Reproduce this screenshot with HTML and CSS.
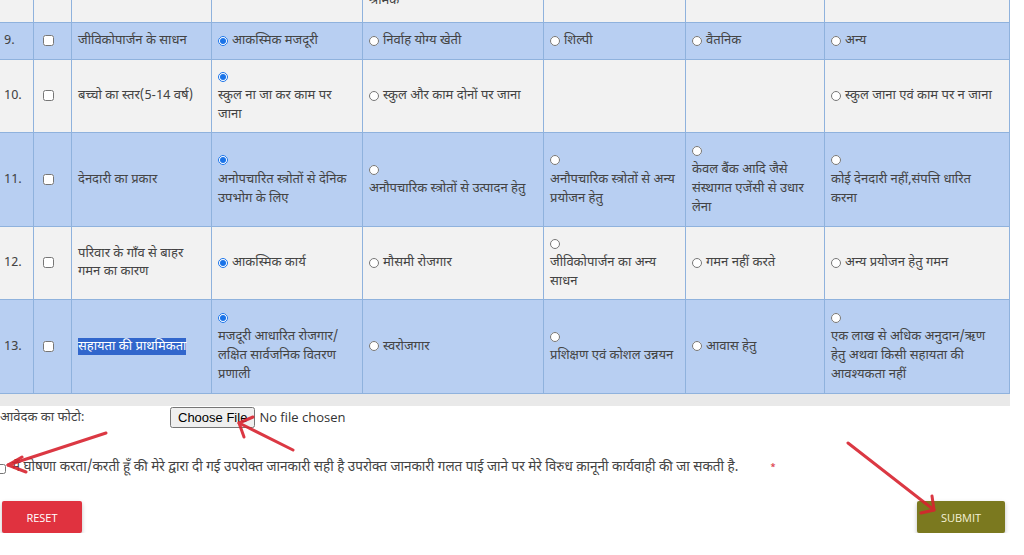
FILE: index.html
```html
<!DOCTYPE html>
<html lang="hi">
<head>
  <meta charset="UTF-8" />
  <meta name="viewport" content="width=device-width, initial-scale=1.0"/>
  <title>सर्वेक्षण प्रपत्र</title>
  <link rel="stylesheet" href="styles.css">
</head>
<body>

<div class="form-wrap">
  <table class="survey">
    <colgroup>
      <col class="c-no"><col class="c-chk"><col class="c-q">
      <col class="c-o1"><col class="c-o2"><col class="c-o3"><col class="c-o4"><col class="c-o5">
    </colgroup>
    <tr class="row-grey r8">
      <td></td>
      <td></td>
      <td></td>
      <td></td>
      <td><input type="radio" name="q8"><span class="blk">भूमिहीन कृषि<br>श्रमिक</span></td>
      <td></td>
      <td></td>
      <td></td>
    </tr>
    <tr class="row-blue r9">
      <td>9.</td>
      <td><input type="checkbox"></td>
      <td>जीविकोपार्जन के साधन</td>
      <td><input type="radio" name="q9" checked>आकस्मिक मजदूरी</td>
      <td><input type="radio" name="q9">निर्वाह योग्य खेती</td>
      <td><input type="radio" name="q9">शिल्पी</td>
      <td><input type="radio" name="q9">वैतनिक</td>
      <td><input type="radio" name="q9">अन्य</td>
    </tr>
    <tr class="row-grey r10">
      <td>10.</td>
      <td><input type="checkbox"></td>
      <td>बच्चो का स्तर(5-14 वर्ष)</td>
      <td><input type="radio" name="q10" checked><span class="blk">स्कुल ना जा कर काम पर जाना</span></td>
      <td><input type="radio" name="q10">स्कुल और काम दोनों पर जाना</td>
      <td></td>
      <td></td>
      <td><input type="radio" name="q10">स्कुल जाना एवं काम पर न जाना</td>
    </tr>
    <tr class="row-blue r11">
      <td>11.</td>
      <td><input type="checkbox"></td>
      <td>देनदारी का प्रकार</td>
      <td><input type="radio" name="q11" checked><span class="blk">अनोपचारित स्त्रोतों से देनिक उपभोग के लिए</span></td>
      <td><input type="radio" name="q11"><span class="blk">अनौपचारिक स्त्रोतों से उत्पादन हेतु</span></td>
      <td><input type="radio" name="q11"><span class="blk">अनौपचारिक स्त्रोतों से अन्य प्रयोजन हेतु</span></td>
      <td><input type="radio" name="q11"><span class="blk">केवल बैंक आदि जैसे संस्थागत एजेंसी से उधार लेना</span></td>
      <td><input type="radio" name="q11"><span class="blk">कोई देनदारी नहीं,संपत्ति धारित<br>करना</span></td>
    </tr>
    <tr class="row-grey r12">
      <td>12.</td>
      <td><input type="checkbox"></td>
      <td>परिवार के गाँव से बाहर गमन का कारण</td>
      <td><input type="radio" name="q12" checked>आकस्मिक कार्य</td>
      <td><input type="radio" name="q12">मौसमी रोजगार</td>
      <td><input type="radio" name="q12"><span class="blk">जीविकोपार्जन का अन्य साधन</span></td>
      <td><input type="radio" name="q12">गमन नहीं करते</td>
      <td><input type="radio" name="q12">अन्य प्रयोजन हेतु गमन</td>
    </tr>
    <tr class="row-blue r13">
      <td>13.</td>
      <td><input type="checkbox"></td>
      <td><span class="selected">सहायता की प्राथमिकता</span></td>
      <td><input type="radio" name="q13" checked><span class="blk">मजदूरी आधारित रोजगार/ लक्षित सार्वजनिक वितरण प्रणाली</span></td>
      <td><input type="radio" name="q13">स्वरोजगार</td>
      <td><input type="radio" name="q13"><span class="blk">प्रशिक्षण एवं कोशल उन्नयन</span></td>
      <td><input type="radio" name="q13">आवास हेतु</td>
      <td><input type="radio" name="q13"><span class="blk">एक लाख से अधिक अनुदान/ऋण<br>हेतु अथवा किसी सहायता की<br>आवश्यकता नहीं</span></td>
    </tr>
  </table>
</div>

<div class="photo-row">
  <label class="photo-label" for="photo">आवेदक का फोटो:</label>
  <input type="file" id="photo" class="file-input">
</div>

<div class="declare">
  <input type="checkbox" id="agree">
  <label for="agree">मैं घोषणा करता/करती हूँ की मेरे द्वारा दी गई उपरोक्त जानकारी सही है उपरोक्त जानकारी गलत पाई जाने पर मेरे विरुध क़ानूनी कार्यवाही की जा सकती है.</label>
  <span class="req">*</span>
</div>

<div class="actions">
  <button class="btn btn-reset" type="reset">Reset</button>
  <button class="btn btn-submit" type="submit">Submit</button>
</div>

<!-- red annotation arrows drawn over the page -->
<svg class="marks" width="1024" height="555" viewBox="0 0 1024 555">
  <g fill="none" stroke="#d8232f" stroke-width="3" stroke-linecap="round" stroke-linejoin="round" opacity="0.9">
    <path d="M106 433 L8 465"/>
    <path d="M22 457 L8 465 L26 472"/>
    <path d="M293 450 L239 423"/>
    <path d="M253 417 L239 423 L244 437"/>
    <path d="M848 443 L934 510"/>
    <path d="M932 496 L934 510 L921 513"/>
  </g>
</svg>

</body>
</html>
```

FILE: styles.css
```css
body {
  margin: 0;
  padding: 0;
  background: #fff;
  font-family: "Noto Sans Devanagari", "Lohit Devanagari", "Noto Sans", "Open Sans", sans-serif;
  font-size: 13px;
  color: #444;
  overflow: hidden;
}
.form-wrap {
  width: 1010px;
  background: #e9e9e9;
  padding-bottom: 12px;
  overflow: hidden;
}
.survey {
  border-collapse: collapse;
  table-layout: fixed;
  width: 1010px;
  margin-top: -60px;
  margin-left: -1px;
}
.c-no { width: 34px; }
.c-chk { width: 38px; }
.c-q { width: 140px; }
.c-o1 { width: 151px; }
.c-o2 { width: 181px; }
.c-o3 { width: 142px; }
.c-o4 { width: 139px; }
.c-o5 { width: 185px; }
.survey td {
  border: 1px solid #8fb2dd;
  padding: 8px 6px;
  line-height: 18px;
  vertical-align: middle;
}
.survey td:first-child {
  padding-left: 4px;
}
.r8 { height: 82px; }
.r9 { height: 37px; }
.r10 { height: 73px; }
.r11 { height: 94px; }
.r12 { height: 72px; }
.r13 { height: 94px; }
.row-blue td {
  background: #b8cff2;
}
.row-grey td {
  background: #f2f2f2;
}
.survey input[type="radio"] {
  width: 10px;
  height: 10px;
  margin: 0 4px 0 0;
  vertical-align: middle;
  accent-color: #1a73e8;
}
.survey input[type="checkbox"] {
  width: 11px;
  height: 11px;
  margin: 0 0 0 3px;
  vertical-align: middle;
}
.blk {
  display: block;
  line-height: 19px;
}
.selected {
  background: #3166cc;
  color: #fff;
}
.photo-row {
  display: flex;
  align-items: center;
  height: 23px;
}
.photo-label {
  width: 170px;
}
.file-input {
  font-family: "Open Sans", sans-serif;
  font-size: 13px;
  color: #333;
}
.declare {
  margin-top: 30px;
  line-height: 19px;
  font-size: 13.5px;
  display: flex;
  align-items: center;
  white-space: nowrap;
}
.declare input {
  width: 10px;
  height: 10px;
  margin: 0 6px 0 -4px;
}
.req {
  color: #d8232f;
  font-size: 9px;
  margin-left: 32px;
}
.actions {
  display: flex;
  justify-content: space-between;
  width: 1003px;
  margin-top: 23px;
  padding-left: 2px;
}
.btn {
  height: 32px;
  border: none;
  border-radius: 2px;
  color: #fff;
  font-family: "Open Sans", sans-serif;
  font-size: 11px;
  text-transform: uppercase;
  box-shadow: 0 2px 4px rgba(0,0,0,0.25);
  cursor: pointer;
}
.btn-reset {
  width: 80px;
  background-color: #e0323f;
}
.btn-submit {
  width: 88px;
  background-color: #7b791f;
  color: #f4f2d8;
}
.marks {
  position: absolute;
  left: 0;
  top: 0;
  pointer-events: none;
}
```
